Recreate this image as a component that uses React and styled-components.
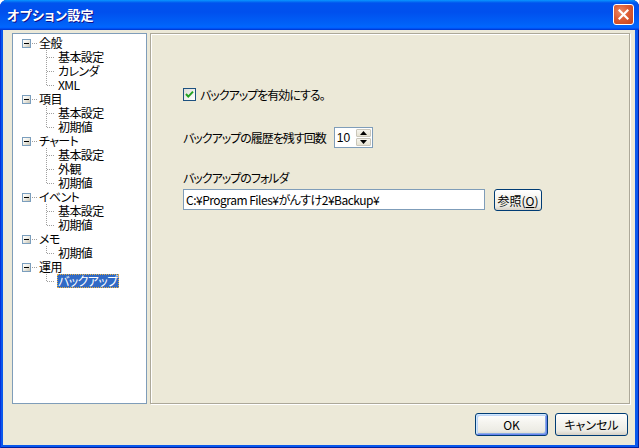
import React from 'react'
import styled, { createGlobalStyle } from 'styled-components'

const GlobalStyle = createGlobalStyle`
  html, body {
    margin: 0;
    padding: 0;
    background: #fff;
    overflow: hidden;
  }
  body {
    font-family: "Noto Sans CJK JP", "Liberation Sans", sans-serif;
    font-size: 12px;
    font-feature-settings: "palt";
  }
`

const tree = [
  { label: '全般', children: ['基本設定', 'カレンダ', 'XML'] },
  { label: '項目', children: ['基本設定', '初期値'] },
  { label: 'チャート', children: ['基本設定', '外観', '初期値'] },
  { label: 'イベント', children: ['基本設定', '初期値'] },
  { label: 'メモ', children: ['初期値'] },
  { label: '運用', children: ['バックアップ'], selected: 0 },
]

export default function App() {
  return (
    <>
      <GlobalStyle />
      <Window>
        <TitleBar>
          <Title>オプション設定</Title>
          <CloseButton aria-label="閉じる">
            <svg width="11" height="11" viewBox="0 0 11 11">
              <path d="M1.5 1.5 L9.5 9.5 M9.5 1.5 L1.5 9.5" stroke="#fff" strokeWidth="2.2" strokeLinecap="square" />
            </svg>
          </CloseButton>
        </TitleBar>
        <Body>
          <Main>
            <TreeView>
              {tree.map(node => (
                <React.Fragment key={node.label}>
                  <TreeRow>
                    <Expander />
                    <HLine />
                    <NodeLabel>{node.label}</NodeLabel>
                  </TreeRow>
                  {node.children.map((child, i) => (
                    <TreeRow key={child + i}>
                      <Connector $last={i === node.children.length - 1} />
                      <NodeLabel $selected={node.selected === i}>{child}</NodeLabel>
                    </TreeRow>
                  ))}
                </React.Fragment>
              ))}
            </TreeView>
            <Panel>
              <CheckRow>
                <CheckBox>
                  <svg width="9" height="9" viewBox="0 0 9 9">
                    <path d="M1 4 L3.3 6.6 L8 1.6" stroke="#21a121" strokeWidth="2" fill="none" />
                  </svg>
                </CheckBox>
                <Caption>バックアップを有効にする。</Caption>
              </CheckRow>
              <SpinRow>
                <Caption>バックアップの履歴を残す回数</Caption>
                <Spinner>
                  <SpinValue>10</SpinValue>
                  <SpinButtons>
                    <SpinButton>
                      <svg width="7" height="4" viewBox="0 0 7 4"><path d="M0 4 L3.5 0 L7 4 Z" fill="#000" /></svg>
                    </SpinButton>
                    <SpinButton>
                      <svg width="7" height="4" viewBox="0 0 7 4"><path d="M0 0 L3.5 4 L7 0 Z" fill="#000" /></svg>
                    </SpinButton>
                  </SpinButtons>
                </Spinner>
              </SpinRow>
              <FieldLabel>バックアップのフォルダ</FieldLabel>
              <InputRow>
                <TextBox>C:¥Program Files¥がんすけ2¥Backup¥</TextBox>
                <Button $width={48} $height={22}>参照(<u>O</u>)</Button>
              </InputRow>
            </Panel>
          </Main>
          <Footer>
            <Button $width={73} $default>OK</Button>
            <Button $width={73}>キャンセル</Button>
          </Footer>
        </Body>
      </Window>
    </>
  )
}

const Window = styled.div`
  width: 639px;
  height: 448px;
  display: flex;
  flex-direction: column;
  background: #0a58ec;
  border-radius: 7px 7px 0 0;
  box-shadow: inset 1px 0 #0831d9, inset -1px 0 #001ea0, inset 0 -1px #001ea0;
  overflow: hidden;
`

const TitleBar = styled.div`
  height: 30px;
  flex-shrink: 0;
  display: flex;
  align-items: center;
  justify-content: space-between;
  padding: 0 5px 0 7px;
  box-sizing: border-box;
  background: linear-gradient(180deg, #0997ff 0%, #0053ee 10%, #0050ee 40%, #0062f8 80%, #0066ff 90%, #005bff 94%, #003dd7 97%, #003dd7 100%);
`

const Title = styled.div`
  color: #fff;
  font-size: 13px;
  font-weight: bold;
  text-shadow: 1px 1px #0f1089;
  letter-spacing: 0.3px;
  margin-top: -1px;
`

const CloseButton = styled.div`
  width: 21px;
  height: 21px;
  box-sizing: border-box;
  border: 1px solid #fff;
  border-radius: 3px;
  display: flex;
  align-items: center;
  justify-content: center;
  background: radial-gradient(circle at 35% 35%, #ec8a66 0%, #dc5c34 45%, #c2401a 100%);
  margin-top: -1px;
`

const Body = styled.div`
  flex: 1;
  margin: 0 4px 3px 3px;
  background: #ece9d8;
  padding: 3px 5px 9px 9px;
  display: flex;
  flex-direction: column;
`

const Main = styled.div`
  display: flex;
  gap: 3px;
  height: 371px;
`

const TreeView = styled.div`
  width: 135px;
  box-sizing: border-box;
  border: 1px solid #7f9db9;
  background: #fff;
  padding: 2px 0 0 0;
  display: flex;
  flex-direction: column;
`

const TreeRow = styled.div`
  height: 14px;
  display: flex;
  align-items: center;
`

const dotsH = 'repeating-linear-gradient(90deg, #a0a0a0 0 1px, transparent 1px 2px)'
const dotsV = 'repeating-linear-gradient(180deg, #a0a0a0 0 1px, transparent 1px 2px)'

const Expander = styled.span`
  width: 9px;
  height: 9px;
  box-sizing: border-box;
  margin-left: 9px;
  border: 1px solid #7b9ebd;
  background: linear-gradient(135deg, #ffffff 0%, #f0efe8 45%, #c7c3b3 100%);
  position: relative;
  &::after {
    content: '';
    position: absolute;
    left: 1px;
    top: 3px;
    width: 5px;
    height: 1px;
    background: #000;
  }
`

const HLine = styled.span`
  width: 5px;
  height: 1px;
  margin-left: 1px;
  background: ${dotsH};
`

const Connector = styled.span`
  width: 10px;
  height: 14px;
  margin-left: 33px;
  position: relative;
  &::before {
    content: '';
    position: absolute;
    left: 0;
    top: 0;
    width: 1px;
    height: ${p => (p.$last ? '8px' : '14px')};
    background: ${dotsV};
  }
  &::after {
    content: '';
    position: absolute;
    left: 1px;
    top: 7px;
    width: 8px;
    height: 1px;
    background: ${dotsH};
  }
`

const NodeLabel = styled.span`
  height: 14px;
  line-height: 14px;
  padding: 0 1px;
  margin-left: 1px;
  box-sizing: border-box;
  white-space: nowrap;
  letter-spacing: -0.6px;
  color: ${p => (p.$selected ? '#fff' : '#000')};
  background: ${p => (p.$selected ? '#316ac5' : 'transparent')};
  outline: ${p => (p.$selected ? '1px dotted #e8b040' : 'none')};
  outline-offset: -1px;
`

const Panel = styled.div`
  flex: 1;
  box-sizing: border-box;
  border: 1px solid #aca899;
  box-shadow: inset 1px 1px 0 #fff, 1px 1px 0 #fff;
  padding: 54px 0 0 32px;
  display: flex;
  flex-direction: column;
  align-items: flex-start;
  color: #000;
`

const Caption = styled.span`
  letter-spacing: -1px;
  white-space: nowrap;
`

const CheckRow = styled.div`
  display: flex;
  align-items: center;
  gap: 4px;
  height: 13px;
  line-height: 13px;
`

const CheckBox = styled.span`
  width: 13px;
  height: 13px;
  box-sizing: border-box;
  border: 1px solid #1c5180;
  background: linear-gradient(135deg, #dcdcd7 0%, #ffffff 100%);
  display: flex;
  align-items: center;
  justify-content: center;
`

const SpinRow = styled.div`
  margin-top: 26px;
  display: flex;
  align-items: center;
  gap: 8px;
  height: 21px;
`

const Spinner = styled.div`
  width: 39px;
  height: 21px;
  box-sizing: border-box;
  border: 1px solid #7f9db9;
  background: #fff;
  display: flex;
  align-items: center;
  justify-content: space-between;
  padding: 1px 1px 1px 2px;
`

const SpinValue = styled.span`
  font-size: 12px;
  font-family: "Liberation Sans", sans-serif;
`

const SpinButtons = styled.div`
  width: 15px;
  height: 17px;
  display: flex;
  flex-direction: column;
  gap: 1px;
`

const SpinButton = styled.div`
  flex: 1;
  box-sizing: border-box;
  border: 1px solid #c9c6ba;
  border-radius: 1px;
  background: linear-gradient(180deg, #f6f5ee 0%, #e6e2d2 100%);
  display: flex;
  align-items: center;
  justify-content: center;
`

const FieldLabel = styled.div`
  margin-top: 23px;
  height: 14px;
  line-height: 14px;
  letter-spacing: -1px;
`

const InputRow = styled.div`
  margin-top: 4px;
  display: flex;
  align-items: flex-start;
  gap: 9px;
`

const TextBox = styled.div`
  width: 302px;
  height: 21px;
  box-sizing: border-box;
  border: 1px solid #7f9db9;
  background: #fff;
  padding: 0 2px;
  line-height: 19px;
  white-space: nowrap;
  letter-spacing: -0.5px;
`

const Button = styled.div`
  width: ${p => p.$width}px;
  height: ${p => p.$height || 23}px;
  box-sizing: border-box;
  border: 1px solid #003c74;
  border-radius: 3px;
  background: linear-gradient(180deg, #ffffff 0%, #f5f4ef 40%, #ecebe4 80%, #d6d0c5 100%);
  box-shadow: ${p => (p.$default ? 'inset 1px 1px 0 #cee7ff, inset -1px -1px 0 #6982ee, inset 2px 2px 0 #bcd4f6, inset -2px -2px 0 #89ade4' : 'none')};
  display: flex;
  align-items: center;
  justify-content: center;
  white-space: nowrap;
  color: #000;
  u {
    text-decoration: underline;
  }
`

const Footer = styled.div`
  margin-top: 9px;
  display: flex;
  justify-content: flex-end;
  gap: 7px;
  padding-right: 2px;
`
